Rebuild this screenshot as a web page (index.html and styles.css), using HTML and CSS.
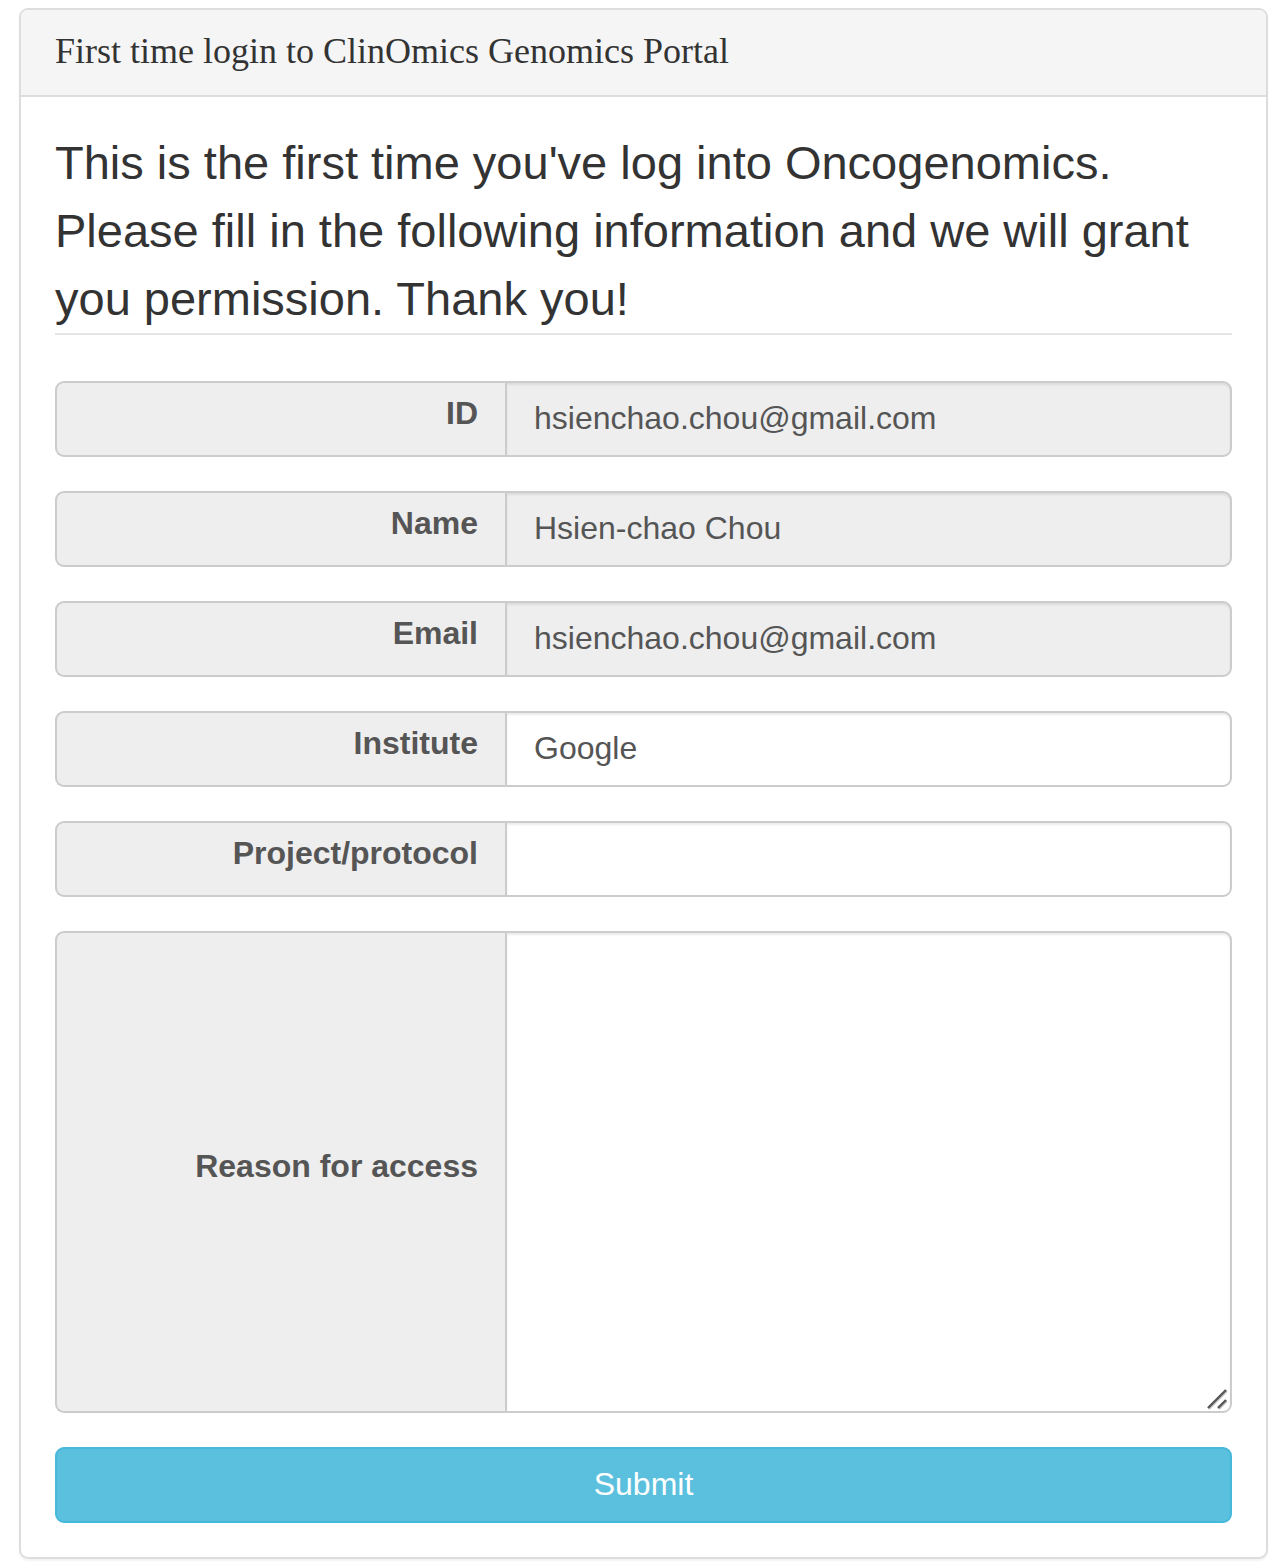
FILE: index.html
```html
<!DOCTYPE html>
<html lang="en">
<head>
<meta charset="utf-8">
<title>First time login</title>
<link rel="stylesheet" href="styles.css">
</head>
<body>
<main class="panel">
  <header class="panel-heading"><h1 class="panel-title">First time login to ClinOmics Genomics Portal</h1></header>
  <form class="panel-body">
    <p class="intro">This is the first time you've log into Oncogenomics. Please fill in the following information and we will grant you permission. Thank you!</p>
    <div class="group">
      <label class="addon" for="id">ID</label>
      <input class="control" id="id" type="text" value="hsienchao.chou@gmail.com" readonly>
    </div>
    <div class="group">
      <label class="addon" for="name">Name</label>
      <input class="control" id="name" type="text" value="Hsien-chao Chou" readonly>
    </div>
    <div class="group">
      <label class="addon" for="email">Email</label>
      <input class="control" id="email" type="text" value="hsienchao.chou@gmail.com" readonly>
    </div>
    <div class="group">
      <label class="addon" for="institute">Institute</label>
      <input class="control" id="institute" type="text" value="Google">
    </div>
    <div class="group">
      <label class="addon" for="project">Project/protocol</label>
      <input class="control" id="project" type="text">
    </div>
    <div class="group group-tall">
      <label class="addon" for="reason">Reason for access</label>
      <div class="area">
        <textarea class="control" id="reason"></textarea>
        <svg class="grip" width="22" height="22" viewBox="0 0 22 22" aria-hidden="true">
          <path d="M3 21L21 3M13 21L21 13" fill="none" stroke="#c8c8c8" stroke-width="2"/>
          <path d="M2 20L20 2M12 20L20 12" fill="none" stroke="#555" stroke-width="2.4"/>
        </svg>
      </div>
    </div>
    <button class="submit" type="submit">Submit</button>
  </form>
</main>
</body>
</html>
```
FILE: styles.css
```css
* {
  box-sizing: border-box;
}

body {
  margin: 0;
  padding: 8px 14px 9px 19px;
  background: #fff;
  color: #333;
  font-family: "Liberation Sans", Arial, sans-serif;
}

.panel {
  border: 2px solid #ddd;
  border-radius: 9px;
  box-shadow: 0 2px 2px rgba(0, 0, 0, 0.05);
  overflow: hidden;
}

.panel-heading {
  padding: 21px 34px 23px;
  border-bottom: 2px solid #ddd;
  background: #f5f5f5;
}

.panel-title {
  margin: 0;
  font: 36px/41px "Liberation Serif", "Times New Roman", serif;
}

.panel-body {
  padding: 32px 34px 34px;
}

.intro {
  margin: 0 0 46px;
  border-bottom: 2px solid #e5e5e5;
  font-size: 47px;
  line-height: 68px;
}

.group {
  display: flex;
  min-height: 76px;
  margin-bottom: 34px;
}

.group-tall {
  min-height: 482px;
}

.addon {
  flex: 0 0 450px;
  display: flex;
  align-items: center;
  justify-content: flex-end;
  padding: 0 27px 12px 0;
  border: 2px solid #ccc;
  border-right: 0;
  border-radius: 9px 0 0 9px;
  background: #eee;
  color: #555;
  font-size: 32px;
  font-weight: 700;
}

.control {
  flex: 1;
  min-width: 0;
  margin: 0;
  padding: 0 27px 2px;
  border: 2px solid #ccc;
  border-radius: 0 9px 9px 0;
  background: #fff;
  box-shadow: inset 0 2px 2px rgba(0, 0, 0, 0.075);
  color: #555;
  font: 32px "Liberation Sans", Arial, sans-serif;
}

.control:read-only {
  background: #eee;
}

.area {
  position: relative;
  flex: 1;
  display: flex;
}

.area .control {
  padding: 14px 27px;
  resize: none;
}

.grip {
  position: absolute;
  right: 4px;
  bottom: 3px;
  pointer-events: none;
}

.submit {
  display: block;
  width: 100%;
  height: 76px;
  padding: 0 0 2px;
  border: 2px solid #46b8da;
  border-radius: 9px;
  background: #5bc0de;
  color: #fff;
  font: 32px "Liberation Sans", Arial, sans-serif;
}
```
